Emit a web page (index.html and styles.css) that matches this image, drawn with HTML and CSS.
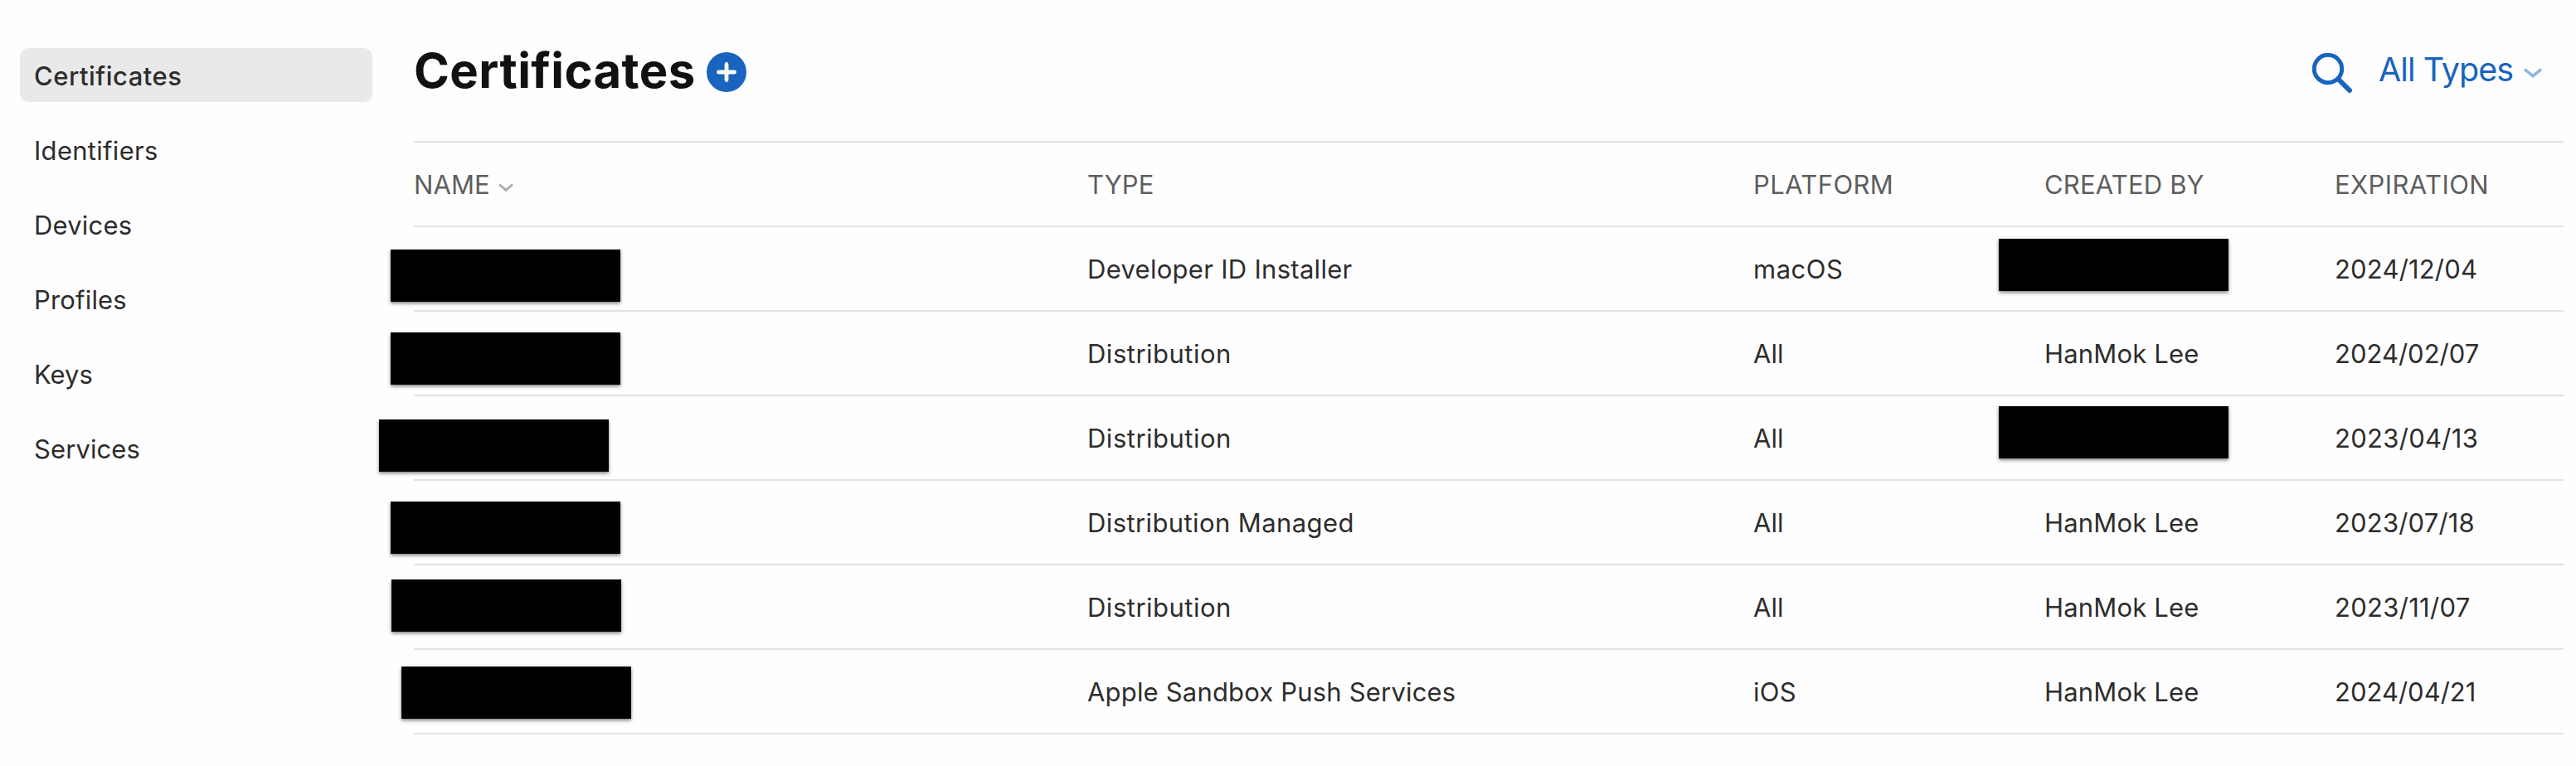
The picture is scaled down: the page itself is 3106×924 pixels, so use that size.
FILE: index.html
```html
<!DOCTYPE html>
<html lang="en">
<head>
<meta charset="utf-8">
<title>Certificates</title>
<link rel="stylesheet" href="styles.css">
</head>
<body>
<div class="layout">
  <nav class="sidebar">
    <a class="nav-item active track-5">Certificates</a>
    <a class="nav-item track-3">Identifiers</a>
    <a class="nav-item track-2">Devices</a>
    <a class="nav-item track-2">Profiles</a>
    <a class="nav-item">Keys</a>
    <a class="nav-item track-1">Services</a>
  </nav>
  <main class="content">
    <header class="page-head">
      <h1 class="title">Certificates</h1>
      <svg class="add" viewBox="0 0 48 48"><circle cx="24" cy="24" r="24"/><path d="M24 14.5v19M14.5 24h19"/></svg>
      <div class="tools">
        <svg class="search" viewBox="0 0 48 48"><circle cx="19" cy="19" r="16.7"/><path d="M31.5 31.5L45 45"/></svg>
        <span class="filter">All Types</span>
        <svg class="filter-chevron" viewBox="0 0 22 12"><path d="M1 1.5l10 8.2 10-8.2"/></svg>
      </div>
    </header>
    <div class="table">
      <div class="row head">
        <span class="cell track-1">NAME<svg class="sort-chevron" viewBox="0 0 18 11"><path d="M1 1.5l8 6.8 8-6.8"/></svg></span>
        <span class="cell track-1">TYPE</span>
        <span class="cell track-4">PLATFORM</span>
        <span class="cell track-2">CREATED BY</span>
        <span class="cell track-4">EXPIRATION</span>
      </div>
      <div class="row">
        <span class="cell"><i class="redacted name-1"></i></span>
        <span class="cell track-3">Developer ID Installer</span>
        <span class="cell track-5">macOS</span>
        <span class="cell"><i class="redacted by-1"></i></span>
        <span class="cell track-2">2024/12/04</span>
      </div>
      <div class="row">
        <span class="cell"><i class="redacted name-2"></i></span>
        <span class="cell track-5">Distribution</span>
        <span class="cell">All</span>
        <span class="cell track-2">HanMok Lee</span>
        <span class="cell">2024/02/07</span>
      </div>
      <div class="row">
        <span class="cell"><i class="redacted name-3"></i></span>
        <span class="cell track-5">Distribution</span>
        <span class="cell">All</span>
        <span class="cell"><i class="redacted by-3"></i></span>
        <span class="cell track-3">2023/04/13</span>
      </div>
      <div class="row">
        <span class="cell"><i class="redacted name-4"></i></span>
        <span class="cell track-4">Distribution Managed</span>
        <span class="cell">All</span>
        <span class="cell track-2">HanMok Lee</span>
        <span class="cell track-2">2023/07/18</span>
      </div>
      <div class="row">
        <span class="cell"><i class="redacted name-5"></i></span>
        <span class="cell track-5">Distribution</span>
        <span class="cell">All</span>
        <span class="cell track-2">HanMok Lee</span>
        <span class="cell track-3">2023/11/07</span>
      </div>
      <div class="row">
        <span class="cell"><i class="redacted name-6"></i></span>
        <span class="cell track-2">Apple Sandbox Push Services</span>
        <span class="cell track-3">iOS</span>
        <span class="cell track-2">HanMok Lee</span>
        <span class="cell">2024/04/21</span>
      </div>
    </div>
  </main>
</div>
</body>
</html>
```
FILE: styles.css
```css
body {
  margin: 0;
  background: #fefefe;
  color: #2d2d2d;
  font: 400 31px Inter, "Liberation Sans", sans-serif;
}

.layout {
  display: grid;
  grid-template-columns: 425px 2592px;
  column-gap: 50px;
  height: 924px;
  padding-left: 24px;
}

.sidebar {
  display: flex;
  flex-direction: column;
  gap: 25px;
  padding-top: 58px;
}

.nav-item {
  height: 65px;
  line-height: 67px;
  padding-left: 17px;
  border-radius: 10px;
  box-sizing: border-box;
}

.nav-item.active {
  background: #e9e9e9;
  font-weight: 500;
}

.page-head {
  display: flex;
  height: 170px;
}

.title {
  margin: 0;
  font-size: 58px;
  font-weight: 700;
  letter-spacing: 0.42px;
  line-height: 70px;
  padding-top: 50px;
  width: 353px;
  color: #111;
}

.add {
  width: 48px;
  height: 48px;
  margin-top: 63px;
  fill: #1864be;
}

.add path {
  stroke: #fefefe;
  stroke-width: 4.8;
  stroke-linecap: round;
}

.tools {
  display: flex;
  margin-left: auto;
  padding-right: 26px;
  color: #1864be;
}

.search {
  width: 48px;
  height: 48px;
  margin-top: 64px;
  margin-right: 32px;
  fill: none;
  stroke: #1864be;
  stroke-width: 5;
}

.search path {
  stroke-width: 6;
  stroke-linecap: round;
}

.filter {
  width: 175px;
  padding-top: 60px;
  font-size: 39.5px;
  line-height: 48px;
  letter-spacing: -0.95px;
}

.filter-chevron {
  width: 22px;
  height: 12px;
  margin-top: 82px;
  fill: none;
  stroke: #8db3e1;
  stroke-width: 3.4;
}

.table {
  border-top: 2px solid #e1e1e1;
}

.row {
  display: grid;
  grid-template-columns: 812px 803px 351px 350px 276px;
  height: 100px;
  line-height: 102px;
  border-bottom: 2px solid #e1e1e1;
}

.row.head {
  color: #5e5e5e;
}

.cell {
  position: relative;
  height: 100px;
  white-space: nowrap;
}

.sort-chevron {
  width: 18px;
  height: 11px;
  margin-left: 10px;
  fill: none;
  stroke: #acacac;
  stroke-width: 2.9;
  vertical-align: 2px;
}

.track-1 { letter-spacing: 0.09px; }
.track-2 { letter-spacing: 0.18px; }
.track-3 { letter-spacing: 0.29px; }
.track-4 { letter-spacing: 0.4px; }
.track-5 { letter-spacing: 0.5px; }

/* Privacy masks laid freely over table values */
.redacted {
  position: absolute;
  width: 277px;
  height: 63px;
  background: #000;
  box-shadow: 0 2px 4px rgba(0, 0, 0, 0.5);
}

.name-1 { left: -28px; top: 27px; }
.name-2 { left: -28px; top: 25px; }
.name-3 { left: -42px; top: 28px; }
.name-4 { left: -28px; top: 25px; }
.name-5 { left: -27px; top: 17px; }
.name-6 { left: -15px; top: 20px; }
.by-1 { left: -55px; top: 14px; }
.by-3 { left: -55px; top: 12px; }
```
